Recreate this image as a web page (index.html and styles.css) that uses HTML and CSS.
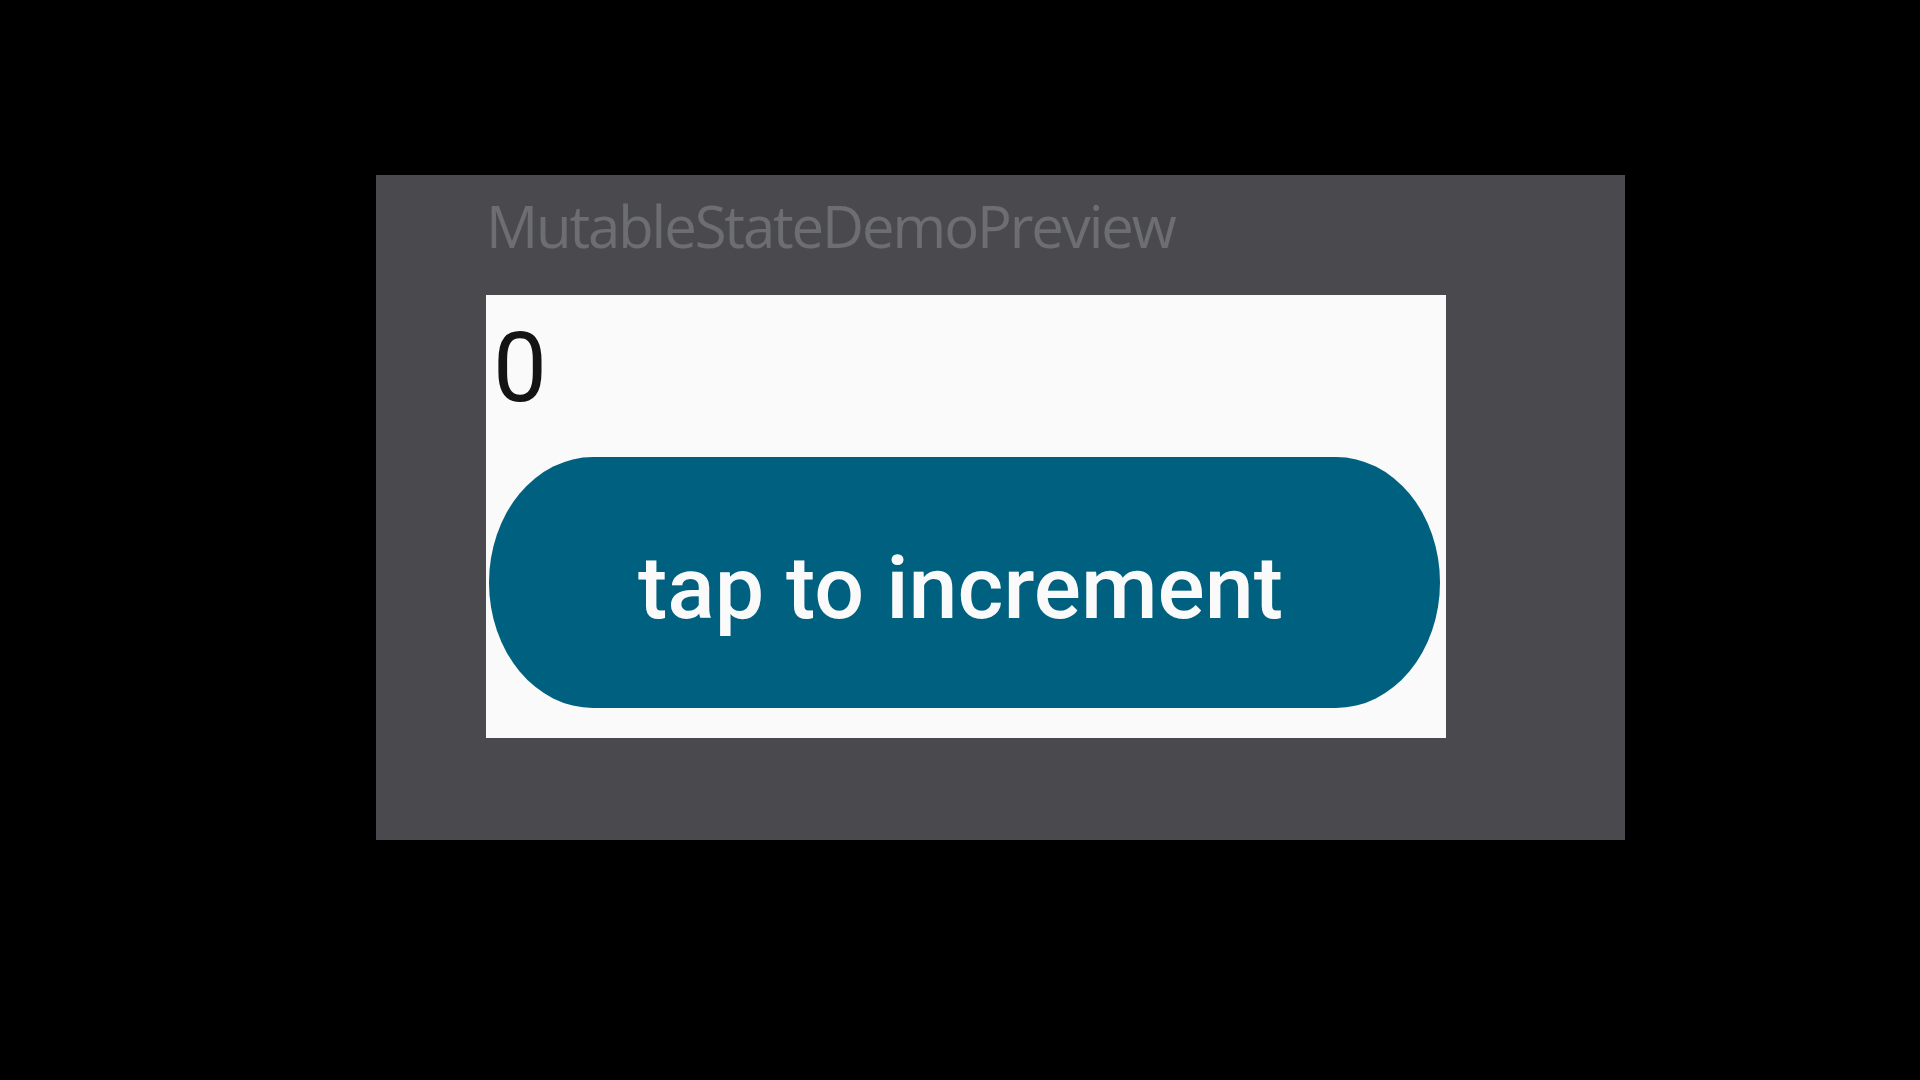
FILE: index.html
```html
<!DOCTYPE html>
<html lang="en">
<head>
<meta charset="utf-8">
<title>MutableStateDemoPreview</title>
<link rel="stylesheet" href="styles.css">
</head>
<body>
<div class="stage">
  <section class="preview-panel">
    <div class="preview-title">MutableStateDemoPreview</div>
    <div class="device">
      <div class="count">0</div>
      <button class="tap-button" type="button">tap to increment</button>
    </div>
  </section>
</div>
</body>
</html>
```
FILE: styles.css
```css
html, body {
  margin: 0;
  padding: 0;
  background: #000000;
}

.stage {
  width: 1920px;
  height: 1080px;
  padding: 175px 0 0 376px;
  box-sizing: border-box;
}

.preview-panel {
  width: 1249px;
  height: 665px;
  background: #4a4a4e;
  box-sizing: border-box;
  padding: 22px 0 0 110px;
}

.preview-title {
  font-family: "Open Sans", "DejaVu Sans", sans-serif;
  font-size: 58px;
  line-height: 58px;
  letter-spacing: -2.1px;
  color: #6d6d74;
  margin-left: 0;
  white-space: nowrap;
}

.device {
  margin-top: 40px;
  width: 960px;
  height: 443px;
  background: #fafafa;
  box-sizing: border-box;
  padding-top: 25px;
}

.count {
  font-family: Roboto, "Liberation Sans", sans-serif;
  font-size: 96px;
  line-height: 96px;
  color: #141414;
  padding-left: 7px;
}

.tap-button {
  display: flex;
  align-items: center;
  justify-content: center;
  margin: 41px 0 0 3px;
  width: 951px;
  height: 251px;
  border: none;
  border-radius: 104px / 125.5px;
  background: #00607f;
  color: #fafafa;
  font-family: Roboto, "Liberation Sans", sans-serif;
  font-weight: 500;
  font-size: 88px;
  line-height: 88px;
  padding: 10px 8px 0 0;
  box-sizing: border-box;
  cursor: pointer;
}
```
